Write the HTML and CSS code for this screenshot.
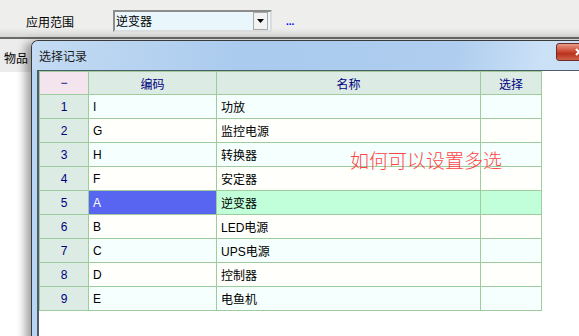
FILE: index.html
```html
<!DOCTYPE html>
<html lang="zh-CN">
  <head>
    <meta charset="UTF-8" />
    <title>选择记录</title>
    <link rel="stylesheet" href="styles.css">
  </head>
  <body>
    <div class="form">
      <div class="toolbar">
        <span class="label">应用范围</span>
        <div class="combo">
          <span class="combo-text">逆变器</span>
          <span class="combo-btn">
            <svg width="7" height="4" viewBox="0 0 7 4"><path d="M0 0h7L3.5 4z" fill="#000"/></svg>
          </span>
        </div>
        <a class="more">...</a>
      </div>
      <div class="subbar">
        <span class="label">物品</span>
      </div>
    </div>

    <div class="dialog">
      <div class="titlebar">
        <span class="title">选择记录</span>
        <span class="close">
          <svg width="8" height="8" viewBox="0 0 8 8"><path d="M1 1l6 6M7 1L1 7" stroke="#fff" stroke-width="2"/></svg>
        </span>
      </div>
      <div class="frame">
        <div class="client">
          <table class="grid">
            <colgroup>
              <col class="c-no" />
              <col class="c-code" />
              <col class="c-name" />
              <col class="c-pick" />
            </colgroup>
            <thead>
              <tr>
                <th class="corner">&minus;</th>
                <th>编码</th>
                <th>名称</th>
                <th>选择</th>
              </tr>
            </thead>
            <tbody>
              <tr class="odd"><td class="no">1</td><td>I</td><td>功放</td><td></td></tr>
              <tr><td class="no">2</td><td>G</td><td>监控电源</td><td></td></tr>
              <tr class="odd"><td class="no">3</td><td>H</td><td>转换器</td><td></td></tr>
              <tr><td class="no">4</td><td>F</td><td>安定器</td><td></td></tr>
              <tr class="current"><td class="no">5</td><td class="focus">A</td><td>逆变器</td><td></td></tr>
              <tr><td class="no">6</td><td>B</td><td>LED电源</td><td></td></tr>
              <tr class="odd"><td class="no">7</td><td>C</td><td>UPS电源</td><td></td></tr>
              <tr><td class="no">8</td><td>D</td><td>控制器</td><td></td></tr>
              <tr class="odd"><td class="no">9</td><td>E</td><td>电鱼机</td><td></td></tr>
            </tbody>
          </table>
          <div class="note">如何可以设置多选</div>
        </div>
      </div>
    </div>
  </body>
</html>
```

FILE: styles.css
```css
body {
  margin: 0;
  width: 579px;
  height: 336px;
  overflow: hidden;
  background: #fff;
  font-family: "Liberation Sans", "Noto Sans CJK SC", sans-serif;
  font-size: 12px;
  color: #000;
  position: relative;
}
.toolbar {
  height: 37px;
  display: flex;
  align-items: center;
  padding-left: 26px;
  background: linear-gradient(#eeeeec 0, #eeeeec 28px, #d6d6d4 37px);
  border-bottom: 2px solid #6a6a6a;
}
.toolbar .label {
  font-family: "Noto Sans CJK SC", sans-serif;
  font-size: 12px;
  margin-top: 5px;
}
.combo {
  margin-left: 39px;
  width: 159px;
  height: 22px;
  box-sizing: border-box;
  display: flex;
  align-items: center;
  background: #e9f7fc;
  border: 2px solid #8c8c8c;
  border-right-color: #dcdcdc;
  border-bottom-color: #dcdcdc;
  margin-top: 4px;
}
.combo-text {
  flex: 1;
  padding-left: 1px;
  font-family: "Noto Sans CJK SC", sans-serif;
  font-size: 12px;
}
.combo-btn {
  width: 15px;
  height: 18px;
  margin-right: 2px;
  background: #f2f2f2;
  border: 1px solid #a8a8a8;
  box-sizing: border-box;
  display: flex;
  align-items: center;
  justify-content: center;
}
.more {
  margin-left: 14px;
  margin-top: 6px;
  color: #0000ff;
  font-weight: bold;
  font-size: 10px;
}
.subbar {
  height: 33px;
  background: #ececec;
  display: flex;
  align-items: center;
  padding-left: 4px;
}
.subbar .label {
  font-family: "Noto Sans CJK SC", sans-serif;
  font-size: 12px;
  margin-top: 4px;
}

/* popup window */
.dialog {
  position: absolute;
  left: 31px;
  top: 40px;
  width: 600px;
  height: 300px;
  border: 1px solid #3a3a3a;
  border-right: 0;
  border-radius: 7px 0 0 0;
  background: #b9d5f5;
  box-shadow: -6px 2px 9px rgba(0, 0, 0, 0.35);
}
.titlebar {
  height: 29px;
  position: relative;
  display: flex;
  align-items: center;
  padding-left: 7px;
  border-radius: 6px 0 0 0;
  background: linear-gradient(100deg, #c4dbf3 0%, #aacbee 35%, #aecdef 70%, #cbe1f6 85%, #c6ddf5 100%);
}
.title {
  font-family: "Noto Sans CJK SC", sans-serif;
  font-size: 12px;
  color: #1a1a1a;
}
.close {
  position: absolute;
  left: 524px;
  top: 2px;
  width: 43px;
  height: 18px;
  border: 1px solid #6e2c24;
  border-radius: 3px;
  background: linear-gradient(#e59a8a 0, #d0543f 40%, #b8321e 60%, #d06148 100%);
  display: flex;
  align-items: center;
  padding-left: 18px;
  box-sizing: border-box;
}
.frame {
  padding-left: 5px;
}
.client {
  position: relative;
  height: 270px;
  background: #fff;
  border-top: 1px solid #4f5c6a;
  border-left: 2px solid #4f5c6a;
}

/* grid */
.grid {
  border-collapse: collapse;
  table-layout: fixed;
  width: 502px;
}
.c-no { width: 49px; }
.c-code { width: 128px; }
.c-name { width: 264px; }
.c-pick { width: 61px; }
.grid th,
.grid td {
  border: 1px solid #9fcc9c;
  padding: 0 0 0 4px;
  white-space: nowrap;
  overflow: hidden;
  font-family: "Liberation Sans", "Noto Sans CJK SC", sans-serif;
  font-size: 12px;
}
.grid thead tr {
  height: 23px;
}
.grid th {
  background: #dcebe4;
  color: #000080;
  font-weight: normal;
  text-align: center;
  padding: 0;
}
.grid th.corner {
  background: #f4e4ee;
}
.grid tbody tr {
  height: 24px;
  background: #fffffc;
}
.grid tbody tr.odd {
  background: #f5fffd;
}
.grid td.no {
  background: #dcebe4;
  color: #000080;
  text-align: center;
  padding: 0;
}
.grid tr.current {
  background: #c0ffd9;
}
.grid td.focus {
  background: #5865f0;
  color: #fff;
}
.note {
  position: absolute;
  left: 311px;
  top: 79px;
  font-family: "Noto Sans CJK SC", sans-serif;
  font-size: 19px;
  line-height: 20px;
  color: #ff4545;
  font-weight: 300;
}
```
